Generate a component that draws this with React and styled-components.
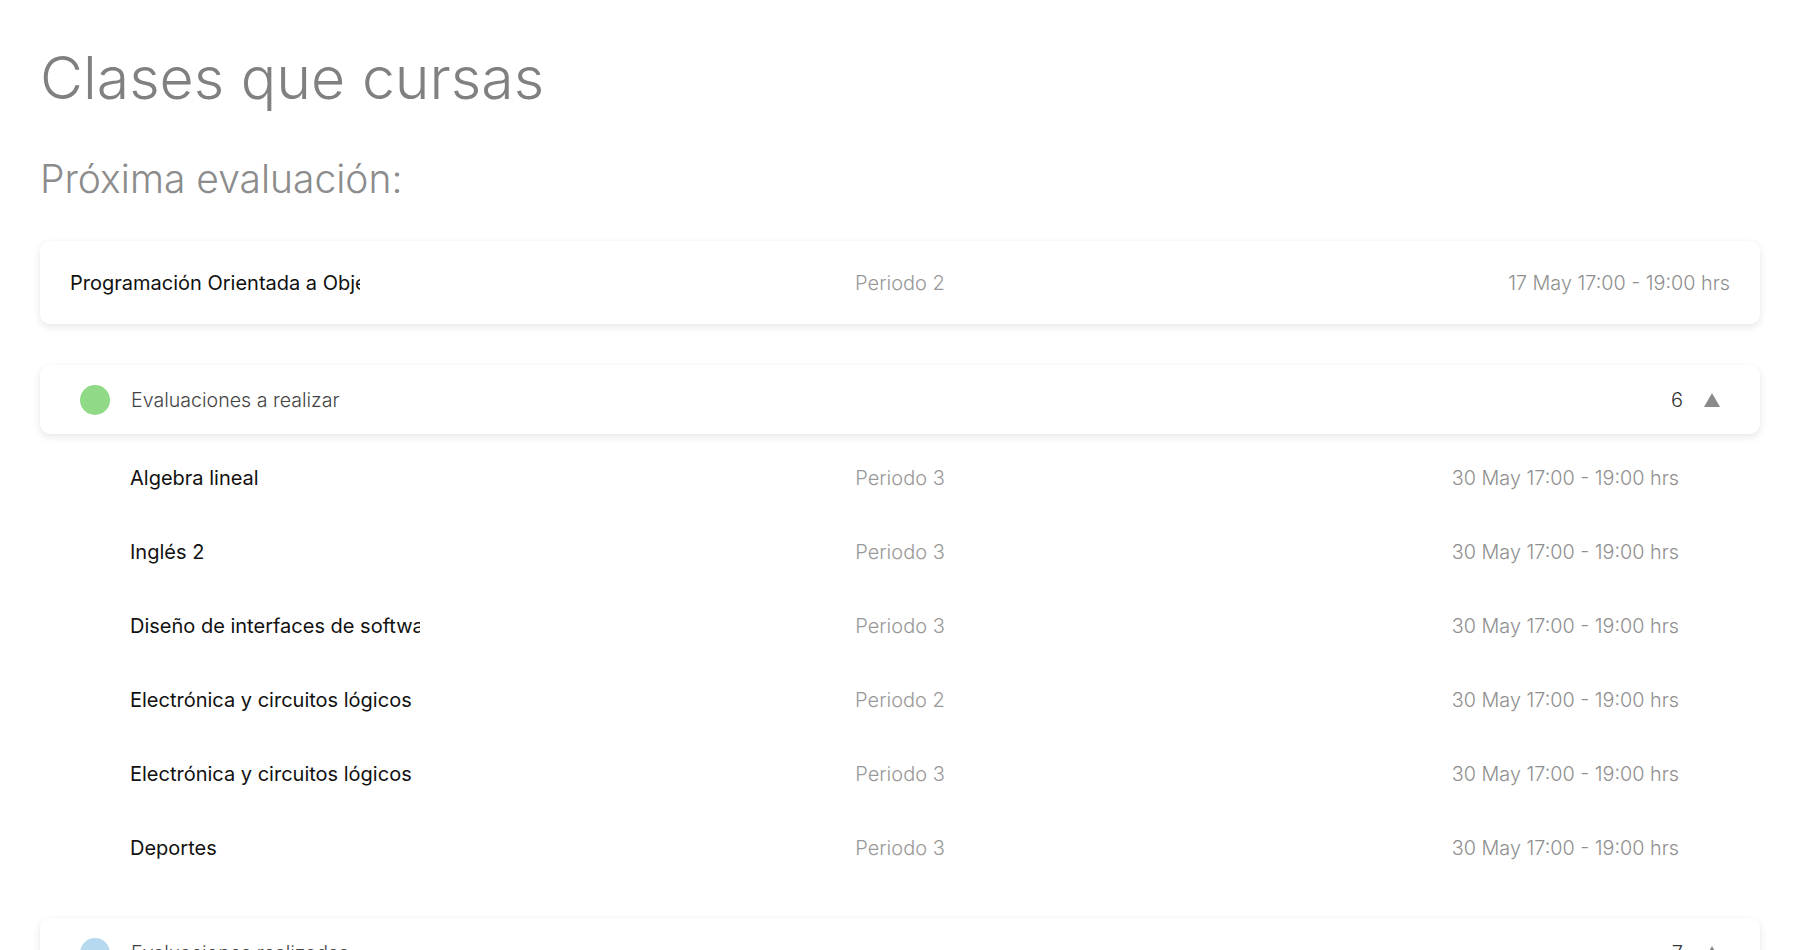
import React from "react";
import styled, { createGlobalStyle } from "styled-components";

const GlobalStyle = createGlobalStyle`
  html, body {
    margin: 0;
    padding: 0;
    background: #ffffff;
    font-family: "Inter", "Noto Sans", sans-serif;
  }
`;

const proxima = {
  nombre: "Programación Orientada a Objetos",
  periodo: "Periodo 2",
  fecha: "17 May 17:00 - 19:00 hrs",
};

const grupos = [
  {
    titulo: "Evaluaciones a realizar",
    color: "#8fd987",
    clases: [
      { nombre: "Algebra lineal", periodo: "Periodo 3" },
      { nombre: "Inglés 2", periodo: "Periodo 3" },
      { nombre: "Diseño de interfaces de software", periodo: "Periodo 3" },
      { nombre: "Electrónica y circuitos lógicos", periodo: "Periodo 2" },
      { nombre: "Electrónica y circuitos lógicos", periodo: "Periodo 3" },
      { nombre: "Deportes", periodo: "Periodo 3" },
    ],
  },
  {
    titulo: "Evaluaciones realizadas",
    color: "#b7d9ef",
    clases: [
      { nombre: "Cálculo diferencial", periodo: "Periodo 1" },
      { nombre: "Inglés 1", periodo: "Periodo 1" },
      { nombre: "Fundamentos de programación", periodo: "Periodo 1" },
      { nombre: "Química", periodo: "Periodo 1" },
      { nombre: "Ética", periodo: "Periodo 1" },
      { nombre: "Física", periodo: "Periodo 2" },
      { nombre: "Deportes", periodo: "Periodo 2" },
    ],
  },
];

function Triangulo() {
  return (
    <svg width="16" height="14" viewBox="0 0 16 14">
      <polygon points="8,0 16,14 0,14" fill="#8a8a8a" />
    </svg>
  );
}

export default function App() {
  return (
    <Page>
      <GlobalStyle />
      <Title>Clases que cursas</Title>
      <Subtitle>Próxima evaluación:</Subtitle>

      <Card>
        <Name>{proxima.nombre}</Name>
        <Period>{proxima.periodo}</Period>
        <DateText>{proxima.fecha}</DateText>
      </Card>

      {grupos.map((g) => (
        <Group key={g.titulo}>
          <Header>
            <Dot color={g.color} />
            <HeaderTitle>{g.titulo}</HeaderTitle>
            <Count>{g.clases.length}</Count>
            <Triangulo />
          </Header>
          <List>
            {g.clases.map((c, i) => (
              <Row key={i}>
                <Name indent>{c.nombre}</Name>
                <Period>{c.periodo}</Period>
                <DateText>30 May 17:00 - 19:00 hrs</DateText>
              </Row>
            ))}
          </List>
        </Group>
      ))}
    </Page>
  );
}

const Page = styled.div`
  height: 100vh;
  overflow: hidden;
  box-sizing: border-box;
  padding: 48px 40px 0 40px;
`;

const Title = styled.h1`
  margin: 0;
  font-size: 59px;
  line-height: 59px;
  font-weight: 300;
  color: #808080;
`;

const Subtitle = styled.h2`
  margin: 52px 0 0 0;
  font-size: 39px;
  line-height: 40px;
  font-weight: 300;
  color: #8c8c8c;
`;

const Card = styled.div`
  margin-top: 42px;
  height: 83px;
  box-sizing: border-box;
  padding: 0 30px;
  display: grid;
  grid-template-columns: 1fr auto 1fr;
  align-items: center;
  background: #fff;
  border-radius: 10px;
  box-shadow: 0 3px 8px rgba(0, 0, 0, 0.09), 0 0 2px rgba(0, 0, 0, 0.03);
`;

const Name = styled.div`
  width: 290px;
  padding-left: ${(p) => (p.indent ? "9px" : "0")};
  overflow: hidden;
  white-space: nowrap;
  font-size: 20px;
  font-weight: 400;
  color: #111;
`;

const Period = styled.div`
  font-size: 20px;
  font-weight: 300;
  color: #999;
`;

const DateText = styled.div`
  justify-self: end;
  font-size: 19.8px;
  font-weight: 300;
  color: #8f8f8f;
`;

const Group = styled.div`
  margin-top: 41px;

  & + & {
    margin-top: 33px;
  }
`;

const Header = styled.div`
  height: 69px;
  box-sizing: border-box;
  padding: 0 40px;
  display: flex;
  align-items: center;
  background: #fff;
  border-radius: 10px;
  box-shadow: 0 3px 8px rgba(0, 0, 0, 0.09), 0 0 2px rgba(0, 0, 0, 0.03);
`;

const Dot = styled.span`
  width: 30px;
  height: 30px;
  border-radius: 50%;
  background: ${(p) => p.color};
  flex-shrink: 0;
`;

const HeaderTitle = styled.span`
  margin-left: 21px;
  flex: 1;
  font-size: 19.6px;
  font-weight: 300;
  color: #444;
`;

const Count = styled.span`
  margin-right: 21px;
  font-size: 20px;
  font-weight: 300;
  color: #333;
`;

const List = styled.div`
  padding: 7px 81px 0 81px;
`;

const Row = styled.div`
  height: 74px;
  display: grid;
  grid-template-columns: 1fr auto 1fr;
  align-items: center;
`;
